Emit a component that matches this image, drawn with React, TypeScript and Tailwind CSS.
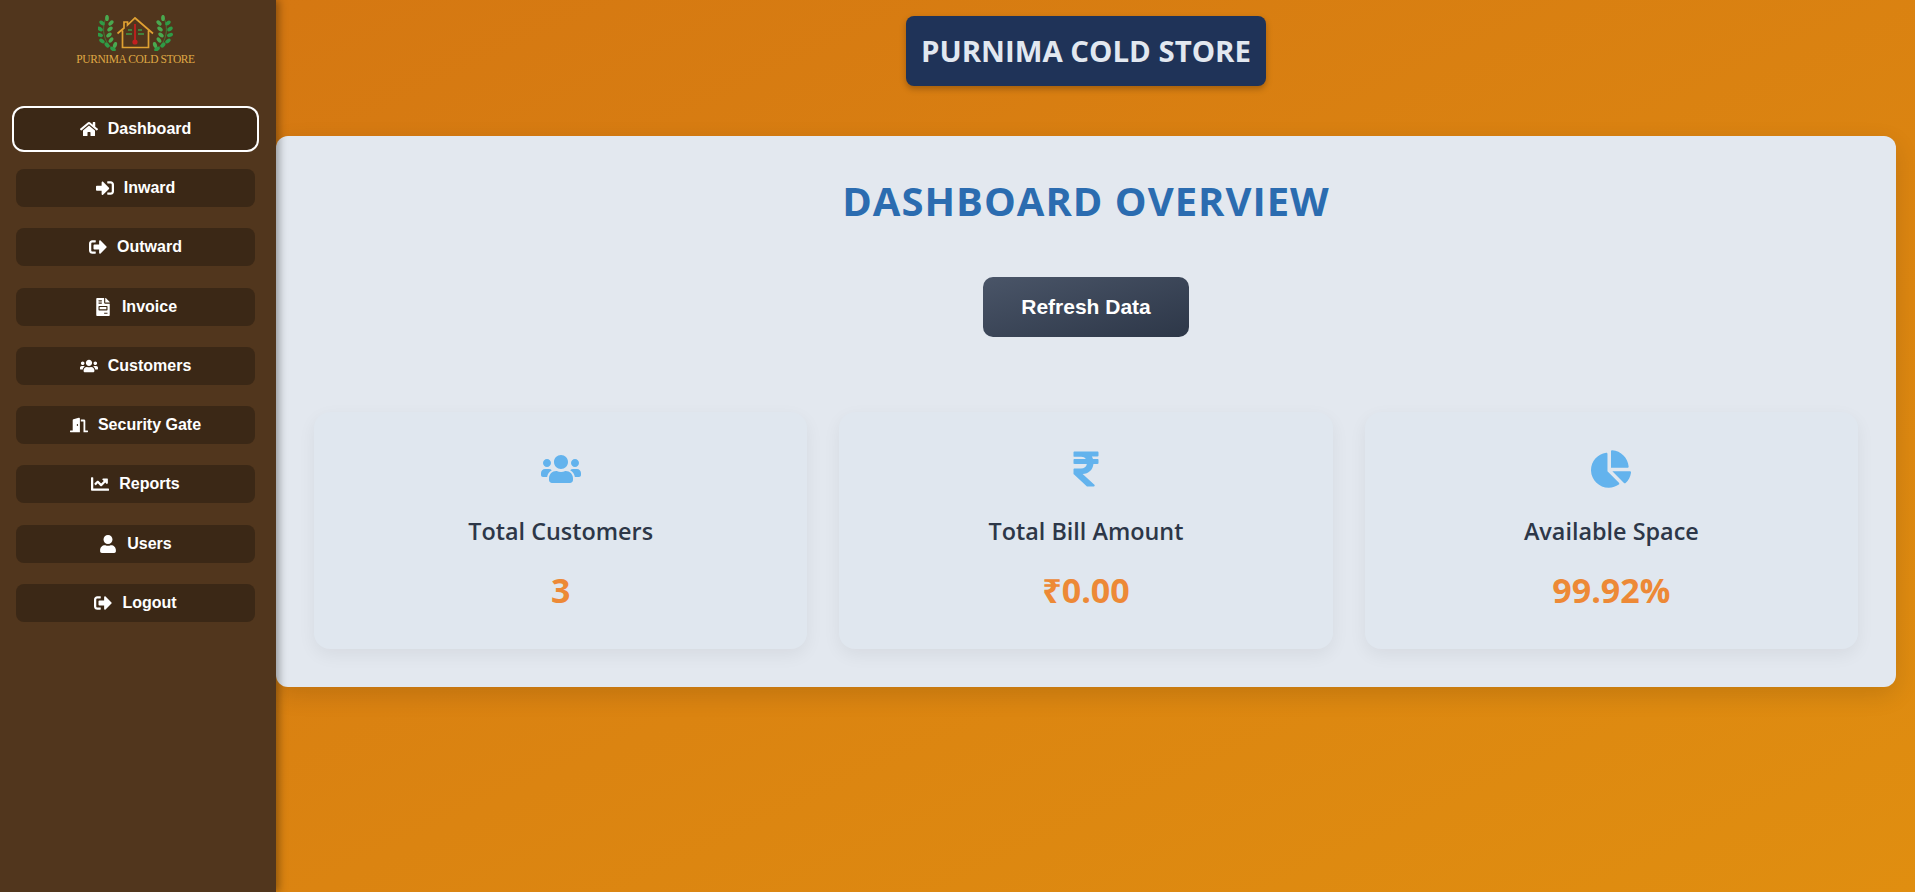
import React from 'react';
import { IconType } from 'react-icons';
import {
  FaHome,
  FaSignInAlt,
  FaSignOutAlt,
  FaFileInvoice,
  FaUsers,
  FaDoorOpen,
  FaChartLine,
  FaUser,
  FaRupeeSign,
  FaChartPie,
} from 'react-icons/fa';

const navItems: { label: string; icon: IconType; active?: boolean }[] = [
  { label: 'Dashboard', icon: FaHome, active: true },
  { label: 'Inward', icon: FaSignInAlt },
  { label: 'Outward', icon: FaSignOutAlt },
  { label: 'Invoice', icon: FaFileInvoice },
  { label: 'Customers', icon: FaUsers },
  { label: 'Security Gate', icon: FaDoorOpen },
  { label: 'Reports', icon: FaChartLine },
  { label: 'Users', icon: FaUser },
  { label: 'Logout', icon: FaSignOutAlt },
];

const stats: { label: string; value: string; icon: IconType }[] = [
  { label: 'Total Customers', value: '3', icon: FaUsers },
  { label: 'Total Bill Amount', value: '₹0.00', icon: FaRupeeSign },
  { label: 'Available Space', value: '99.92%', icon: FaChartPie },
];

// leaf positions for one wreath branch: x, y, rotation
const leaves = [
  [9, 3, 0], [4, 8, -50], [13, 8, 45], [2, 14, -60], [12, 14, 50],
  [2, 20, -70], [11, 20, 50], [4, 26, -55], [13, 25, 35], [9, 30, -40], [17, 30, 20], [15, 34, -60],
];

function Logo() {
  return (
    <svg viewBox="0 0 76 36" className="w-[76px] h-[36px]">
      {[false, true].map((flip) => (
        <g key={String(flip)} transform={flip ? 'translate(74 0) scale(-1 1)' : undefined}>
          <path d="M8 3 C4 12 4 26 16 35" fill="none" stroke="#3f8a3a" strokeWidth="0.8" />
          {leaves.map(([x, y, r], i) => (
            <ellipse
              key={i}
              cx={x}
              cy={y}
              rx="1.9"
              ry="3.1"
              fill={i % 2 ? '#2f9b46' : '#4aa94f'}
              transform={`rotate(${r} ${x} ${y})`}
            />
          ))}
        </g>
      ))}
      <path
        d="M19.5 18.5 L26 13 V7 H29.5 V10 L37 3 L55 18.5 M50.5 15.5 V32.5 H24.5 V15.5"
        fill="none"
        stroke="#e0a132"
        strokeWidth="1.7"
      />
      <path d="M37 9 V26" stroke="#c3201f" strokeWidth="1.8" />
      <circle cx="37" cy="27" r="2.6" fill="#c3201f" />
      <path d="M28 19 H34 M40 19 H46 M30 15 H34 M40 15 H44" stroke="#3f9a45" strokeWidth="1.3" />
    </svg>
  );
}

function NavButton({ label, icon: Icon, active }: { label: string; icon: IconType; active?: boolean }) {
  return (
    <button
      className={
        active
          ? 'h-[38px] w-full flex items-center justify-center gap-[10px] rounded-lg bg-[#3b2816] text-white font-bold text-base shadow-[0_0_0_2px_#3b2816,0_0_0_4px_#ffffff]'
          : 'h-[38px] w-full flex items-center justify-center gap-[10px] rounded-lg bg-[#3b2816] text-white font-bold text-base'
      }
    >
      <Icon size={18} />
      <span>{label}</span>
    </button>
  );
}

function App() {
  return (
    <div className="h-screen flex overflow-hidden bg-gradient-to-br from-[#d47612] to-[#e08e10] font-['Open_Sans','Noto_Sans',sans-serif]">
      <aside className="relative z-10 w-[276px] shrink-0 bg-[#51361d] shadow-[3px_0_8px_rgba(0,0,0,0.35)] pl-4 pr-[21px] font-['Liberation_Sans',Arial,sans-serif]">
        <div className="h-[110px] pt-[15px] flex flex-col items-center">
          <Logo />
          <span className="mt-[1px] text-[11.5px] leading-[15px] tracking-[-0.4px] text-[#dfa845] font-['Liberation_Serif',serif] whitespace-nowrap">
            PURNIMA COLD STORE
          </span>
        </div>
        <nav className="flex flex-col gap-[21.22px]">
          {navItems.map((item) => (
            <NavButton key={item.label} {...item} />
          ))}
        </nav>
      </aside>

      <main className="flex-1 pr-[19px] flex flex-col items-center min-w-0">
        <div className="mt-4 h-[70px] w-[360px] flex items-center justify-center rounded-lg bg-[#1f3358] shadow-[0_3px_6px_rgba(0,0,0,0.25)]">
          <h1 className="text-[29.4px] font-bold text-[#e2e8f0] whitespace-nowrap">PURNIMA COLD STORE</h1>
        </div>

        <section className="mt-[50px] w-full rounded-xl bg-[#e3e8ef] p-[38px] shadow-[0_8px_24px_rgba(0,0,0,0.12)]">
          <h2 className="text-center text-[40px] leading-[54px] font-bold tracking-[1px] text-[#2b6cb0]">
            DASHBOARD OVERVIEW
          </h2>
          <div className="mt-[49px] flex justify-center">
            <button className="h-[60px] w-[206px] pb-[1px] rounded-[10px] bg-gradient-to-br from-[#4a5568] to-[#2d3748] text-white font-bold text-[21px] font-['Liberation_Sans',Arial,sans-serif]">
              Refresh Data
            </button>
          </div>
          <div className="mt-[75px] grid grid-cols-3 gap-8">
            {stats.map(({ label, value, icon: Icon }) => (
              <div
                key={label}
                className="h-[237px] rounded-2xl bg-[#e0e7ef] shadow-[0_6px_18px_rgba(0,0,0,0.06)] flex flex-col items-center pt-[37px]"
              >
                <Icon size={40} className="text-[#63b3ed]" />
                <div className="mt-[26px] text-[23.4px] leading-8 font-[550] text-[#2d3748]">{label}</div>
                <div className="mt-[20px] text-[34px] leading-[46px] font-bold text-[#ed8936]">{value}</div>
              </div>
            ))}
          </div>
        </section>
      </main>
    </div>
  );
}

export default App;
